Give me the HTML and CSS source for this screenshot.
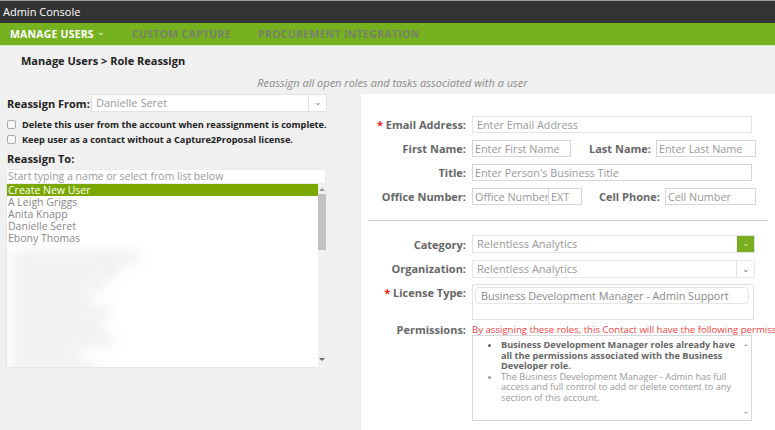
FILE: index.html
```html
<!DOCTYPE html>
<html lang="en">
<head>
    <meta charset="UTF-8">
    <title>Admin Console</title>
    <link rel="stylesheet" href="styles.css">
</head>
<body>
    <div class="topbar">Admin Console</div>
    <div class="nav">
        <span class="nav-item active">MANAGE USERS <span class="caret">&#8964;</span></span>
        <span class="nav-item">CUSTOM CAPTURE</span>
        <span class="nav-item">PROCUREMENT INTEGRATION</span>
    </div>

    <div class="crumb">Manage Users &gt; Role Reassign</div>
    <div class="subtitle">Reassign all open roles and tasks associated with a user</div>

    <div class="content">
        <div class="left">
            <div class="from-row">
                <label class="bold">Reassign From:</label>
                <div class="select from-select">
                    <span class="select-text">Danielle Seret</span>
                    <span class="select-btn">&#8964;</span>
                </div>
            </div>
            <div class="check"><span class="box"></span>Delete this user from the account when reassignment is complete.</div>
            <div class="check"><span class="box"></span>Keep user as a contact without a Capture2Proposal license.</div>
            <div class="to-label bold">Reassign To:</div>
            <div class="search">Start typing a name or select from list below</div>
            <div class="list">
                <div class="items">
                    <div class="item selected">Create New User</div>
                    <div class="item">A Leigh Griggs</div>
                    <div class="item">Anita Knapp</div>
                    <div class="item">Danielle Seret</div>
                    <div class="item">Ebony Thomas</div>
                    <!-- remaining names are blurred out in the capture -->
                    <div class="blurred">
                        <div class="smudge" style="width: 130px"></div>
                        <div class="smudge" style="width: 110px"></div>
                        <div class="smudge" style="width: 95px"></div>
                        <div class="smudge" style="width: 80px"></div>
                        <div class="smudge" style="width: 100px"></div>
                        <div class="smudge" style="width: 90px"></div>
                        <div class="smudge" style="width: 105px"></div>
                        <div class="smudge" style="width: 70px"></div>
                        <div class="smudge" style="width: 85px"></div>
                    </div>
                </div>
                <div class="scroll">
                    <span class="arrow up"></span>
                    <span class="thumb"></span>
                    <span class="arrow down"></span>
                </div>
            </div>
        </div>

        <div class="right">
            <div class="row">
                <label><span class="req">*</span> Email Address:</label>
                <div class="input wide caret-in">Enter Email Address</div>
            </div>
            <div class="row">
                <label>First Name:</label>
                <div class="input first">Enter First Name</div>
                <label class="inline">Last Name:</label>
                <div class="input last">Enter Last Name</div>
            </div>
            <div class="row">
                <label>Title:</label>
                <div class="input wide">Enter Person's Business Title</div>
            </div>
            <div class="row">
                <label>Office Number:</label>
                <div class="input office">Office Number</div>
                <div class="input ext">EXT</div>
                <label class="inline cell-label">Cell Phone:</label>
                <div class="input cell">Cell Number</div>
            </div>
            <div class="divider"></div>
            <div class="row r-cat">
                <label>Category:</label>
                <div class="select wide-select">
                    <span class="select-text">Relentless Analytics</span>
                    <span class="select-btn green">&#8964;</span>
                </div>
            </div>
            <div class="row r-org">
                <label>Organization:</label>
                <div class="select wide-select">
                    <span class="select-text">Relentless Analytics</span>
                    <span class="select-btn">&#8964;</span>
                </div>
            </div>
            <div class="row r-lic">
                <label><span class="req">*</span> License Type:</label>
                <div class="license">
                    <div class="tag">Business Development Manager - Admin Support</div>
                </div>
            </div>
            <div class="row r-perm">
                <label>Permissions:</label>
                <div class="perm-col">
                    <div class="warn">By assigning these roles, this Contact will have the following permissions:</div>
                    <div class="perm-box">
                        <ul>
                            <li class="bold">Business Development Manager roles already have all the permissions associated with the Business Developer role.</li>
                            <li>The Business Development Manager - Admin has full access and full control to add or delete content to any section of this account.</li>
                        </ul>
                        <div class="mini-scroll">
                            <span class="tri up"></span>
                            <span class="tri down"></span>
                        </div>
                    </div>
                </div>
            </div>
        </div>
    </div>
</body>
</html>
```

FILE: styles.css
```css
body {
    margin: 0;
    font-family: "Open Sans", Arial, sans-serif;
    background: #f0f0f0;
    color: #333;
    width: 775px;
    height: 430px;
    overflow: hidden;
}
.bold {
    font-weight: bold;
}
.topbar {
    height: 22px;
    border-top: 1px solid #9a9a9a;
    background: #333333;
    color: #fff;
    font-size: 11px;
    line-height: 22px;
    padding-left: 3px;
}
.nav {
    height: 22px;
    background: #76b11f;
    border-bottom: 1px solid #d8e8c0;
    display: flex;
    align-items: center;
    padding-left: 10px;
    gap: 27px;
}
.nav-item {
    font-size: 10.5px;
    font-weight: bold;
    color: #778069;
    letter-spacing: 0.3px;
}
.nav-item.active {
    color: #fff;
    letter-spacing: 0.2px;
}
.caret {
    font-size: 9px;
    color: #c8e0a8;
    position: relative;
    top: -3px;
}
.crumb {
    font-size: 11px;
    font-weight: bold;
    color: #222;
    padding: 7px 0 0 21px;
    height: 17px;
}
.subtitle {
    font-size: 11px;
    font-style: italic;
    color: #8a8a8a;
    text-align: center;
    padding-left: 10px;
    height: 24px;
    line-height: 25px;
}
.content {
    display: flex;
}
.left {
    width: 361px;
    flex-shrink: 0;
    padding-left: 6px;
    box-sizing: border-box;
}
.from-row {
    display: flex;
    align-items: center;
    height: 18px;
    font-size: 11px;
}
.from-row label {
    width: 84px;
    color: #222;
    padding-left: 1px;
}
.select {
    display: flex;
    background: #fff;
    border: 1px solid #e2e2e2;
    box-sizing: border-box;
    font-size: 11px;
    color: #999;
}
.from-select {
    width: 236px;
    height: 18px;
}
.select-text {
    flex: 1;
    padding-left: 4px;
    line-height: 16px;
}
.select-btn {
    width: 17px;
    border-left: 1px solid #e2e2e2;
    text-align: center;
    font-size: 9px;
    line-height: 14px;
    color: #777;
}
.select-btn.green {
    background: #7aad1f;
    color: #e8f4d8;
    border-left: none;
}
.check {
    display: flex;
    align-items: center;
    font-size: 9.2px;
    font-weight: bold;
    color: #222;
    height: 15px;
    margin-top: 5px;
}
.check + .check {
    margin-top: 0;
}
.box {
    width: 7px;
    height: 7px;
    border: 1px solid #aaa;
    border-radius: 2px;
    background: #f8f8f8;
    margin: 0 6px 0 1px;
}
.to-label {
    font-size: 11px;
    color: #222;
    margin-top: 4px;
    height: 18px;
    padding-left: 1px;
}
.search {
    width: 320px;
    height: 15px;
    box-sizing: border-box;
    background: #fff;
    border: 1px solid #ececec;
    font-size: 10.5px;
    color: #999;
    line-height: 13px;
    padding-left: 1px;
}
.list {
    display: flex;
    width: 320px;
    height: 184px;
}
.items {
    flex: 1;
    background: #fff;
    border-left: 1px solid #e6e6e6;
    border-bottom: 1px solid #e6e6e6;
    overflow: hidden;
}
.item {
    font-size: 10.5px;
    color: #888;
    height: 12px;
    line-height: 12px;
    padding-left: 1px;
}
.item.selected {
    background: #7aa800;
    color: #fff;
}
.blurred {
    filter: blur(7px);
    padding: 8px 0 0 4px;
}
.smudge {
    height: 9px;
    margin-bottom: 5px;
    background: #ebebeb;
}
.scroll {
    width: 8px;
    display: flex;
    flex-direction: column;
    align-items: center;
    background: #f0f0f0;
}
.arrow {
    width: 0;
    height: 0;
    border-left: 3px solid transparent;
    border-right: 3px solid transparent;
}
.arrow.up {
    border-bottom: 3px solid #999;
    margin-top: 4px;
}
.arrow.down {
    border-top: 3px solid #666;
    margin-top: auto;
    margin-bottom: 7px;
}
.thumb {
    width: 8px;
    height: 56px;
    background: #c1c1c1;
    margin-top: 3px;
}
.right {
    flex: 1;
    min-width: 0;
    background: #fff;
    height: 340px;
    padding-top: 22px;
    box-sizing: border-box;
}
.row {
    display: flex;
    align-items: center;
    height: 17px;
    margin-bottom: 7px;
    font-size: 11px;
}
.row label {
    width: 105px;
    flex-shrink: 0;
    text-align: right;
    font-weight: bold;
    color: #666;
    margin-right: 6px;
}
.row label.inline {
    width: auto;
    margin: 0 5px 0 18px;
}
.row label.cell-label {
    margin-left: 17px;
}
.req {
    color: #e31b1b;
}
.input {
    height: 17px;
    flex-shrink: 0;
    box-sizing: border-box;
    border: 1px solid #d6d6d6;
    font-size: 10.8px;
    color: #999;
    line-height: 15px;
    padding-left: 2px;
    white-space: nowrap;
    overflow: hidden;
}
.input.wide {
    width: 280px;
}
.caret-in {
    border-color: #e4e4e4;
    padding-left: 4px;
}
.input.first {
    width: 99px;
}
.input.last {
    width: 100px;
}
.input.office {
    width: 77px;
}
.input.ext {
    width: 33px;
    border-left: none;
}
.input.cell {
    width: 91px;
}
.divider {
    height: 1px;
    background: #c8c8c8;
    margin: 15px 7px 14px 7px;
}
.r-cat .select,
.r-org .select {
    width: 283px;
    height: 18px;
}
.r-cat {
    height: 18px;
}
.r-org {
    margin-bottom: 7px;
}
.r-org .select {
    border-color: #e8e8e8;
}
.r-org .select-btn {
    line-height: 16px;
}
.r-lic {
    align-items: flex-start;
    height: 36px;
    margin-bottom: 4px;
}
.r-lic label {
    padding-top: 1px;
}
.license {
    width: 282px;
    height: 36px;
    box-sizing: border-box;
    border: 1px solid #e2e2e2;
    padding: 2px;
}
.tag {
    width: 274px;
    height: 17px;
    box-sizing: border-box;
    border: 1px solid #e6e6e6;
    border-radius: 4px;
    font-size: 10.8px;
    color: #888;
    padding-left: 5px;
    line-height: 15px;
}
.r-perm {
    align-items: flex-start;
    height: auto;
}
.r-perm label {
    line-height: 11px;
}
.perm-col {
    flex: 1;
    min-width: 0;
    overflow: hidden;
}
.warn {
    font-size: 9.6px;
    color: #f04444;
    white-space: nowrap;
    height: 11px;
    line-height: 11px;
}
.perm-box {
    position: relative;
    width: 280px;
    height: 86px;
    box-sizing: border-box;
    border: 1px solid #d8d8d8;
    font-size: 9.2px;
    color: #999;
    line-height: 10.5px;
}
.perm-box ul {
    margin: 4px 0 0 0;
    padding: 0 12px 0 28px;
}
.perm-box li.bold {
    color: #666;
}
.mini-scroll {
    position: absolute;
    right: 0;
    top: 0;
    bottom: 0;
    width: 10px;
    display: flex;
    flex-direction: column;
    align-items: center;
    justify-content: space-between;
    padding: 8px 0 6px;
    box-sizing: border-box;
}
.tri {
    width: 0;
    height: 0;
    border-left: 2px solid transparent;
    border-right: 2px solid transparent;
}
.tri.up {
    border-bottom: 2px solid #aaa;
}
.tri.down {
    border-top: 2px solid #aaa;
}
```
